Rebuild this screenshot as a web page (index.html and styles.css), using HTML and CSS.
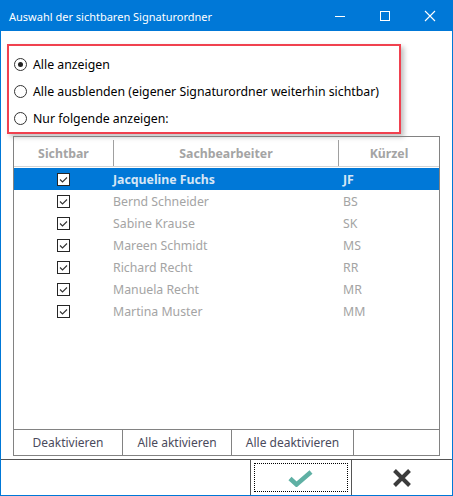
FILE: index.html
```html
<!DOCTYPE html>
<html>
<head>
  <meta charset="utf-8">
  <link rel="stylesheet" href="styles.css">
</head>
<body>
  <div class="window">
    <!-- Title bar -->
    <div class="titlebar">
      <span class="title">Auswahl der sichtbaren Signaturordner</span>
      <div class="caption-buttons">
        <span class="cap-btn">
          <svg width="12" height="12" viewBox="0 0 12 12"><path d="M1 6.5h10" stroke="#fff" stroke-width="1"/></svg>
        </span>
        <span class="cap-btn">
          <svg width="12" height="12" viewBox="0 0 12 12"><rect x="1.5" y="1.5" width="9" height="9" fill="none" stroke="#fff" stroke-width="1"/></svg>
        </span>
        <span class="cap-btn">
          <svg width="12" height="12" viewBox="0 0 12 12"><path d="M1 1l10 10M11 1L1 11" stroke="#fff" stroke-width="1.1"/></svg>
        </span>
      </div>
    </div>

    <div class="content">
      <!-- Visibility mode -->
      <div class="options">
        <label class="radio-row">
          <span class="radio checked"></span>
          <span>Alle anzeigen</span>
        </label>
        <label class="radio-row">
          <span class="radio"></span>
          <span>Alle ausblenden (eigener Signaturordner weiterhin sichtbar)</span>
        </label>
        <label class="radio-row">
          <span class="radio"></span>
          <span>Nur folgende anzeigen:</span>
        </label>
      </div>

      <!-- Folder list -->
      <div class="grid">
        <div class="grid-head">
          <div class="col-check">Sichtbar</div>
          <div class="col-name">Sachbearbeiter</div>
          <div class="col-short">Kürzel</div>
        </div>
        <div class="grid-body">
          <div class="grid-row selected">
            <div class="col-check"><svg class="checkbox" width="13" height="14" viewBox="0 0 13 14"><rect class="box" x="0.5" y="1.5" width="12" height="12"/><path class="tick" d="M3 7.5l2.5 2.5L10 5.5"/></svg></div>
            <div class="col-name">Jacqueline Fuchs</div>
            <div class="col-short">JF</div>
          </div>
          <div class="grid-row">
            <div class="col-check"><svg class="checkbox" width="13" height="14" viewBox="0 0 13 14"><rect class="box" x="0.5" y="1.5" width="12" height="12"/><path class="tick" d="M3 7.5l2.5 2.5L10 5.5"/></svg></div>
            <div class="col-name">Bernd Schneider</div>
            <div class="col-short">BS</div>
          </div>
          <div class="grid-row">
            <div class="col-check"><svg class="checkbox" width="13" height="14" viewBox="0 0 13 14"><rect class="box" x="0.5" y="1.5" width="12" height="12"/><path class="tick" d="M3 7.5l2.5 2.5L10 5.5"/></svg></div>
            <div class="col-name">Sabine Krause</div>
            <div class="col-short">SK</div>
          </div>
          <div class="grid-row">
            <div class="col-check"><svg class="checkbox" width="13" height="14" viewBox="0 0 13 14"><rect class="box" x="0.5" y="1.5" width="12" height="12"/><path class="tick" d="M3 7.5l2.5 2.5L10 5.5"/></svg></div>
            <div class="col-name">Mareen Schmidt</div>
            <div class="col-short">MS</div>
          </div>
          <div class="grid-row">
            <div class="col-check"><svg class="checkbox" width="13" height="14" viewBox="0 0 13 14"><rect class="box" x="0.5" y="1.5" width="12" height="12"/><path class="tick" d="M3 7.5l2.5 2.5L10 5.5"/></svg></div>
            <div class="col-name">Richard Recht</div>
            <div class="col-short">RR</div>
          </div>
          <div class="grid-row">
            <div class="col-check"><svg class="checkbox" width="13" height="14" viewBox="0 0 13 14"><rect class="box" x="0.5" y="1.5" width="12" height="12"/><path class="tick" d="M3 7.5l2.5 2.5L10 5.5"/></svg></div>
            <div class="col-name">Manuela Recht</div>
            <div class="col-short">MR</div>
          </div>
          <div class="grid-row">
            <div class="col-check"><svg class="checkbox" width="13" height="14" viewBox="0 0 13 14"><rect class="box" x="0.5" y="1.5" width="12" height="12"/><path class="tick" d="M3 7.5l2.5 2.5L10 5.5"/></svg></div>
            <div class="col-name">Martina Muster</div>
            <div class="col-short">MM</div>
          </div>
        </div>
        <div class="grid-actions">
          <button class="action">Deaktivieren</button>
          <button class="action">Alle aktivieren</button>
          <button class="action wide">Alle deaktivieren</button>
          <span class="action-fill"></span>
        </div>
      </div>
    </div>

    <!-- OK / Cancel -->
    <div class="footer">
      <span class="footer-fill"></span>
      <button class="footer-btn ok">
        <span class="focus">
          <svg width="28" height="18" viewBox="0 0 28 18"><path d="M3 9.5l6.5 6L24 3" fill="none" stroke="#5fb0a4" stroke-width="4.5"/></svg>
        </span>
      </button>
      <button class="footer-btn cancel">
        <svg width="20" height="20" viewBox="0 0 20 20"><path d="M2.5 2.5l15 15M17.5 2.5l-15 15" stroke="#3c3c3c" stroke-width="4"/></svg>
      </button>
    </div>
  </div>
</body>
</html>
```

FILE: styles.css
```css
body {
  margin: 0;
  font-family: 'Noto Sans', 'Open Sans', sans-serif;
  font-size: 12px;
  background: #fff;
}
.window {
  width: 453px;
  height: 496px;
  box-sizing: border-box;
  border: 1px solid #0078d7;
  display: flex;
  flex-direction: column;
  background: #fff;
}
.titlebar {
  height: 30px;
  background-color: #0078d7;
  color: white;
  display: flex;
  align-items: center;
  justify-content: space-between;
  flex-shrink: 0;
}
.title {
  padding-left: 8px;
  font-size: 11px;
}
.caption-buttons {
  display: flex;
}
.cap-btn {
  width: 45px;
  height: 30px;
  display: flex;
  align-items: center;
  justify-content: center;
}
.content {
  flex: 1;
  padding: 13px 12px 0 12px;
}
.options {
  width: 394px;
  box-sizing: border-box;
  margin-left: -6px;
  border: 2px solid #f0414f;
  box-shadow: 3px 3px 5px rgba(0,0,0,0.25);
  padding: 5px 0 0 5px;
}
.radio-row {
  display: flex;
  align-items: center;
  gap: 6px;
  height: 27px;
  color: #000;
  font-size: 12.3px;
}
.radio {
  width: 11px;
  height: 11px;
  border: 1px solid #333;
  border-radius: 50%;
  background: white;
  position: relative;
}
.radio.checked::after {
  content: "";
  position: absolute;
  left: 3px;
  top: 3px;
  width: 5px;
  height: 5px;
  border-radius: 50%;
  background: #222;
}
.grid {
  margin-top: 2px;
  height: 318px;
  border: 1px solid #828282;
  display: flex;
  flex-direction: column;
  color: #a4a4a4;
}
.grid-head {
  display: flex;
  height: 29px;
  align-items: flex-end;
  font-weight: bold;
  font-size: 12.3px;
  border-bottom: 1px solid #d4d4d4;
  margin-bottom: 1px;
}
.grid-head > div {
  height: 26px;
  display: flex;
  align-items: center;
  justify-content: center;
}
.grid-head .col-name,
.grid-head .col-short {
  border-left: 1px solid #a0a0a0;
}
.col-check {
  width: 99px;
  flex-shrink: 0;
}
.col-name {
  width: 224px;
  flex-shrink: 0;
}
.col-short {
  flex: 1;
}
.grid-body {
  flex: 1;
}
.grid-row {
  display: flex;
  align-items: center;
  height: 22px;
  font-size: 12.3px;
}
.grid-row .col-check {
  display: flex;
  justify-content: center;
}
.grid-row .col-short {
  padding-left: 6px;
}
.grid-row.selected {
  background-color: #0078d7;
  color: #d6e6f5;
  font-weight: bold;
}
.checkbox {
  display: block;
}
.checkbox .box {
  fill: #fff;
  stroke: #262626;
  stroke-width: 1;
  shape-rendering: crispEdges;
}
.checkbox .tick {
  fill: none;
  stroke: #333;
  stroke-width: 1.1;
}
.grid-actions {
  display: flex;
  height: 25px;
  border-top: 1px solid #828282;
}
.action {
  width: 109px;
  border: none;
  border-right: 1px solid #828282;
  background: white;
  font-family: inherit;
  font-size: 12px;
  color: #4a4a5c;
  padding: 0;
}
.action.wide {
  width: 122px;
}
.action-fill {
  flex: 1;
}
.footer {
  height: 35px;
  flex-shrink: 0;
  border-top: 1px solid #555;
  display: flex;
}
.footer-fill {
  width: 249px;
  border-right: 1px solid #555;
}
.footer-btn {
  width: 101px;
  border: none;
  background: white;
  padding: 0;
  display: flex;
  align-items: center;
  justify-content: center;
}
.footer-btn.ok {
  border-right: 1px solid #555;
  padding: 3px;
}
.focus {
  width: 100%;
  height: 100%;
  border: 1px dotted #000;
  box-sizing: border-box;
  display: flex;
  align-items: center;
  justify-content: center;
}
.footer-btn.cancel {
  flex: 1;
}
```
